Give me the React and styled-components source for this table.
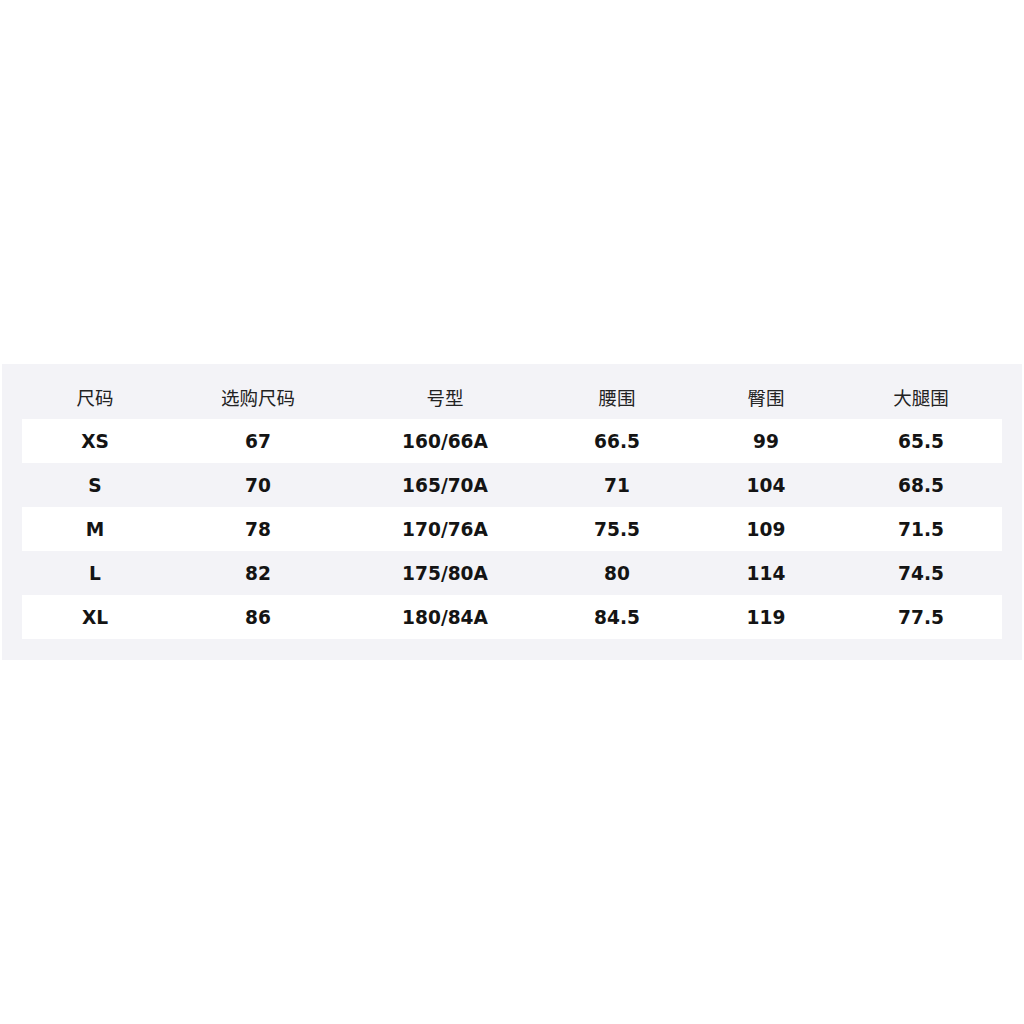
import React from "react";
import styled, { createGlobalStyle } from "styled-components";

const GlobalStyle = createGlobalStyle`
  html, body {
    margin: 0;
    padding: 0;
    background: #ffffff;
  }
  body {
    font-family: "DejaVu Sans", "Noto Sans CJK SC", sans-serif;
  }
`;

const Page = styled.div`
  min-height: 100vh;
  display: flex;
  align-items: center;
  padding: 0 2px;
  box-sizing: border-box;
`;

const Panel = styled.div`
  flex: 1;
  background: #f3f3f7;
  padding: 11px 20px 21px 20px;
  box-sizing: border-box;
`;

const COLS = "146px 180px 194px 150px 148px 1fr";

const HeadRow = styled.div`
  display: grid;
  grid-template-columns: ${COLS};
  height: 44px;
  align-items: center;
`;

const HeadCell = styled.div`
  text-align: center;
  font-family: "Noto Sans CJK SC", "DejaVu Sans", sans-serif;
  font-size: 18.5px;
  color: #222;
`;

const Row = styled.div`
  display: grid;
  grid-template-columns: ${COLS};
  height: 44px;
  align-items: center;
  background: ${(p) => (p.$striped ? "transparent" : "#ffffff")};
`;

const Cell = styled.div`
  text-align: center;
  font-family: "DejaVu Sans", sans-serif;
  font-weight: bold;
  font-size: 18.6px;
  color: #141414;
`;

const headers = ["尺码", "选购尺码", "号型", "腰围", "臀围", "大腿围"];

const rows = [
  ["XS", "67", "160/66A", "66.5", "99", "65.5"],
  ["S", "70", "165/70A", "71", "104", "68.5"],
  ["M", "78", "170/76A", "75.5", "109", "71.5"],
  ["L", "82", "175/80A", "80", "114", "74.5"],
  ["XL", "86", "180/84A", "84.5", "119", "77.5"],
];

export default function App() {
  return (
    <>
      <GlobalStyle />
      <Page>
        <Panel>
          <HeadRow>
            {headers.map((h) => (
              <HeadCell key={h}>{h}</HeadCell>
            ))}
          </HeadRow>
          {rows.map((r, i) => (
            <Row key={r[0]} $striped={i % 2 === 1}>
              {r.map((v, j) => (
                <Cell key={j}>{v}</Cell>
              ))}
            </Row>
          ))}
        </Panel>
      </Page>
    </>
  );
}
